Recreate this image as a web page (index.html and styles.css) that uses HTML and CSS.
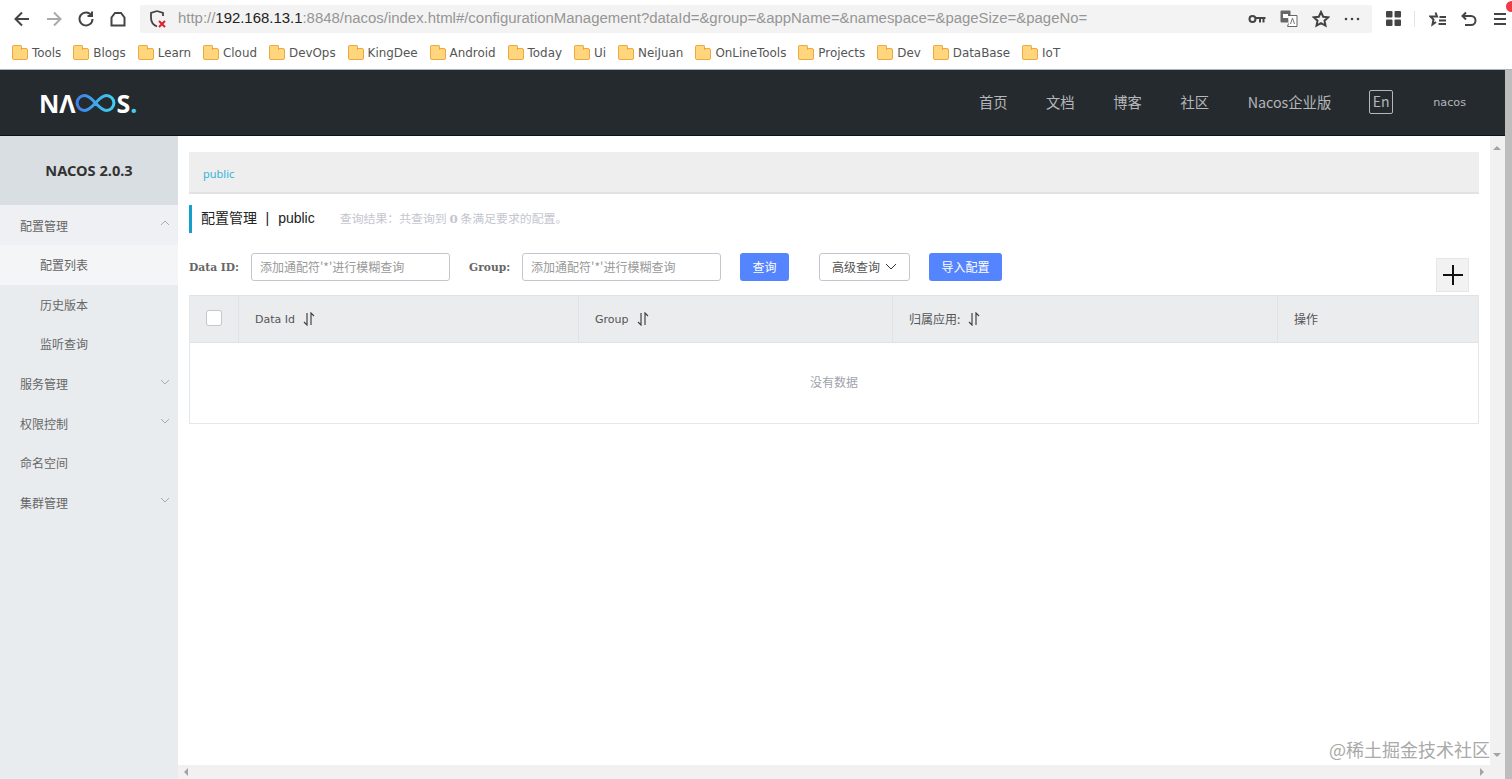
FILE: index.html
```html
<!DOCTYPE html>
<html lang="zh-CN">
<head>
    <meta charset="UTF-8">
    <meta name="viewport" content="width=device-width, initial-scale=1.0">
    <title>Nacos</title>
    <link rel="stylesheet" href="styles.css">
</head>
<body>
    <div class="toolbar">
        <div class="tool"><svg width="18" height="18" viewBox="0 0 18 18"><path d="M16 9H2.5M9 2.5 2.5 9 9 15.500" class="ico"/></svg></div>
        <div class="tool"><svg width="18" height="18" viewBox="0 0 18 18"><path d="M2 9h13.500M9 2.500 15.500 9 9 15.500" class="ico faded"/></svg></div>
        <div class="tool"><svg width="18" height="18" viewBox="0 0 18 18"><path d="M14.500 5.500A6.500 6.500 0 1 0 15.500 9M15 1.500v4.500h-4.500" class="ico"/></svg></div>
        <div class="tool"><svg width="18" height="18" viewBox="0 0 18 18"><path d="M2.500 15.500V7.500L6 3h6l3.500 4.500v8z" class="ico"/></svg></div>
        <div class="address">
            <svg class="shield" width="18" height="20" viewBox="0 0 18 20"><path d="M8 2 2 4v5c0 4 2.500 7 6 8.500M8 2l6 2v3" class="ico thin"/><path d="M10 12l6 6M16 12l-6 6" class="cross"/></svg>
            <div class="url">http://<b>192.168.13.1</b>:8848/nacos/index.html#/configurationManagement?dataId=&amp;group=&amp;appName=&amp;namespace=&amp;pageSize=&amp;pageNo=</div>
            <div class="address-icons">
                <svg width="18" height="12" viewBox="0 0 18 12"><circle cx="4.500" cy="6" r="3" class="ico"/><path d="M8 5h9.500M12 5v4.500M15.500 5v4.500" class="ico"/></svg>
                <svg width="18" height="18" viewBox="0 0 18 18"><rect x="0.500" y="0.500" width="10" height="12" rx="1" fill="#666"/><rect x="3" y="4" width="5" height="4" fill="#fff"/><path d="M8 5.500h9v11H7.500l1-3" fill="#fff" stroke="#666"/><path d="M10.500 14l2-6 2 6" fill="none" stroke="#777"/></svg>
                <svg width="18" height="18" viewBox="0 0 18 18"><path d="M9 2l2.200 4.700 5 .6-3.700 3.400 1 5L9 13.200l-4.500 2.500 1-5L1.800 7.300l5-.6z" class="ico"/></svg>
                <svg width="16" height="4" viewBox="0 0 16 4"><circle cx="2" cy="2" r="1.300" fill="#444"/><circle cx="8" cy="2" r="1.300" fill="#444"/><circle cx="14" cy="2" r="1.300" fill="#444"/></svg>
            </div>
        </div>
        <div class="toolbar-right">
            <svg width="15" height="15" viewBox="0 0 15 15" fill="#444"><rect width="6.500" height="6.500" rx="1"/><rect x="8.500" width="6.500" height="6.500" rx="1"/><rect y="8.500" width="6.500" height="6.500" rx="1"/><rect x="8.500" y="8.500" width="6.500" height="6.500" rx="1"/></svg>
            <span class="divider"></span>
            <svg width="18" height="16" viewBox="0 0 18 16"><path d="M6.500 1.500l1.500 4h-6.500l3 3-1 5 3.500-2.500M10.500 6H17M10 9.500h7M9.500 13H17" class="ico"/></svg>
            <svg width="16" height="16" viewBox="0 0 16 16"><path d="M5 1.500 1.500 5 5 8.500M2 5h8a4 4 0 0 1 0 9H4" class="ico"/></svg>
            <svg width="14" height="14" viewBox="0 0 14 14"><path d="M1 2h12M1 7h12M1 12h12" class="ico"/></svg>
        </div>
        <span class="red-dot"></span>
    </div>

    <div class="bookmarks">
        <div class="bookmark"><span class="folder"></span>Tools</div>
        <div class="bookmark"><span class="folder"></span>Blogs</div>
        <div class="bookmark"><span class="folder"></span>Learn</div>
        <div class="bookmark"><span class="folder"></span>Cloud</div>
        <div class="bookmark"><span class="folder"></span>DevOps</div>
        <div class="bookmark"><span class="folder"></span>KingDee</div>
        <div class="bookmark"><span class="folder"></span>Android</div>
        <div class="bookmark"><span class="folder"></span>Today</div>
        <div class="bookmark"><span class="folder"></span>Ui</div>
        <div class="bookmark"><span class="folder"></span>NeiJuan</div>
        <div class="bookmark"><span class="folder"></span>OnLineTools</div>
        <div class="bookmark"><span class="folder"></span>Projects</div>
        <div class="bookmark"><span class="folder"></span>Dev</div>
        <div class="bookmark"><span class="folder"></span>DataBase</div>
        <div class="bookmark"><span class="folder"></span>IoT</div>
    </div>

    <div class="frame">
        <div class="app">
            <header class="header">
                <div class="logo">NΛ<svg width="41" height="18" viewBox="0 0 41 18"><defs><linearGradient id="loop"><stop offset="0" stop-color="#3f7fe6"/><stop offset="1" stop-color="#3fd0ef"/></linearGradient></defs><path d="M20.500 9C16 4 13 1.600 9.500 1.600a7.400 7.400 0 0 0 0 14.800C13 16.400 16 14 20.500 9S28 1.600 31.500 1.600a7.400 7.400 0 0 1 0 14.800C28 16.400 25 14 20.500 9z" fill="none" stroke="url(#loop)" stroke-width="3"/></svg>S<span class="logo-dot">.</span></div>
                <nav class="nav">
                    <a>首页</a>
                    <a>文档</a>
                    <a>博客</a>
                    <a>社区</a>
                    <a>Nacos企业版</a>
                </nav>
                <div class="lang">En</div>
                <div class="user">nacos</div>
            </header>
            <div class="content">
                <aside class="sidebar">
                    <div class="version">NACOS 2.0.3</div>
                    <div class="menu-item open">配置管理<svg class="chev" width="10" height="6" viewBox="0 0 10 6"><path d="M1 5l4-4 4 4"/></svg></div>
                    <div class="menu-item sub active">配置列表</div>
                    <div class="menu-item sub">历史版本</div>
                    <div class="menu-item sub">监听查询</div>
                    <div class="menu-item">服务管理<svg class="chev" width="10" height="6" viewBox="0 0 10 6"><path d="M1 1l4 4 4-4"/></svg></div>
                    <div class="menu-item">权限控制<svg class="chev" width="10" height="6" viewBox="0 0 10 6"><path d="M1 1l4 4 4-4"/></svg></div>
                    <div class="menu-item">命名空间</div>
                    <div class="menu-item">集群管理<svg class="chev" width="10" height="6" viewBox="0 0 10 6"><path d="M1 1l4 4 4-4"/></svg></div>
                </aside>
                <main class="main">
                    <div class="namespace"><a>public</a></div>
                    <div class="title-row">
                        <h1 class="title">配置管理<span class="sep">|</span>public</h1>
                        <p class="result">查询结果：共查询到 <b>0</b> 条满足要求的配置。</p>
                    </div>
                    <div class="filters">
                        <label class="filter-label">Data ID:</label>
                        <div class="input">添加通配符'*'进行模糊查询</div>
                        <label class="filter-label group-label">Group:</label>
                        <div class="input">添加通配符'*'进行模糊查询</div>
                        <button class="btn primary query">查询</button>
                        <button class="btn advanced">高级查询<svg width="12" height="7" viewBox="0 0 12 7"><path d="M1 1l5 5 5-5"/></svg></button>
                        <button class="btn primary import">导入配置</button>
                    </div>
                    <div class="table">
                        <div class="table-head">
                            <div class="cell"><span class="checkbox"></span></div>
                            <div class="cell">Data Id<svg class="sort" width="12" height="14" viewBox="0 0 12 14"><path d="M4 1v12L1 10M8 13V1l3 3"/></svg></div>
                            <div class="cell">Group<svg class="sort" width="12" height="14" viewBox="0 0 12 14"><path d="M4 1v12L1 10M8 13V1l3 3"/></svg></div>
                            <div class="cell cn">归属应用:<svg class="sort" width="12" height="14" viewBox="0 0 12 14"><path d="M4 1v12L1 10M8 13V1l3 3"/></svg></div>
                            <div class="cell cn">操作</div>
                        </div>
                        <div class="table-empty">没有数据</div>
                    </div>
                    <button class="add"><svg width="20" height="20" viewBox="0 0 20 20"><path d="M10 0v20M0 10h20"/></svg></button>
                </main>
                <div class="vscroll"><span class="arrow up"></span><span class="arrow down"></span></div>
                <div class="hscroll"><span class="arrow left"></span><span class="arrow right"></span></div>
                <div class="watermark">@稀土掘金技术社区</div>
            </div>
        </div>
        <div class="page-scroll"></div>
    </div>
</body>
</html>
```
FILE: styles.css
```css
* {
    margin: 0;
    padding: 0;
    box-sizing: border-box;
}

html, body {
    height: 100%;
    overflow: hidden;
}

body {
    display: flex;
    flex-direction: column;
    background-color: #fff;
    font-family: "Noto Sans CJK SC", "Noto Sans", sans-serif;
    color: #333;
}

.ico {
    fill: none;
    stroke: #444;
    stroke-width: 2;
}

.ico.faded {
    stroke: #aaa;
}

.ico.thin {
    stroke-width: 1.8;
}

.cross {
    stroke: #d8222a;
    stroke-width: 2;
}

/* browser chrome */
.toolbar {
    position: relative;
    height: 33px;
    display: flex;
    align-items: center;
    padding: 4px 0 0 6px;
}

.tool {
    width: 32px;
    display: flex;
    justify-content: center;
}

.address {
    width: 1232px;
    height: 28px;
    margin-left: 6px;
    display: flex;
    align-items: center;
    padding: 0 12px 0 9px;
    background-color: #f3f3f3;
    border-radius: 2px;
}

.shield {
    margin-right: 11px;
}

.url {
    flex: 1;
    padding-bottom: 3px;
    font-family: "Liberation Sans", sans-serif;
    font-size: 14.930px;
    color: #969696;
    white-space: nowrap;
}

.url b {
    font-weight: normal;
    color: #222;
}

.address-icons {
    display: flex;
    align-items: center;
    gap: 14px;
}

.toolbar-right {
    display: flex;
    align-items: center;
    padding-left: 14px;
}

.toolbar-right .divider {
    width: 1px;
    height: 16px;
    margin: 0 14px 0 13px;
    background-color: #e3e3e3;
}

.toolbar-right svg:nth-of-type(3) {
    margin-left: 14px;
}

.toolbar-right svg:nth-of-type(4) {
    margin-left: 16px;
}

.red-dot {
    position: absolute;
    top: 1px;
    right: -5px;
    width: 11px;
    height: 11px;
    border-radius: 50%;
    background-color: #f03a46;
}

.bookmarks {
    height: 37px;
    display: flex;
    align-items: center;
    padding: 3px 0 0 12px;
    border-bottom: 1px solid #aab4bc;
    font-family: "DejaVu Sans", sans-serif;
    font-size: 11.900px;
    color: #555;
}

.bookmark {
    display: flex;
    align-items: center;
    gap: 4px;
    margin-right: 12px;
}

.folder {
    position: relative;
    width: 16px;
    height: 12px;
    margin-top: 2px;
    background-color: #ffd57e;
    border: 1px solid #eda93b;
    border-radius: 2px;
}

.folder::before {
    content: "";
    position: absolute;
    top: -4px;
    left: -1px;
    width: 8px;
    height: 4px;
    background-color: #ffd57e;
    border: 1px solid #eda93b;
    border-bottom: none;
    border-radius: 2px 2px 0 0;
}

.frame {
    flex: 1;
    min-height: 0;
    display: flex;
}

.app {
    flex: 1;
    min-width: 0;
    display: flex;
    flex-direction: column;
}

.page-scroll {
    width: 7px;
    background-color: #bdbdbd;
}

/* nacos header */
.header {
    height: 66px;
    display: flex;
    align-items: center;
    padding-left: 39px;
    background-color: #252a2f;
    border-bottom: 1px solid #111;
    color: #b5b7b9;
}

.logo {
    display: flex;
    align-items: center;
    font-family: "Open Sans", sans-serif;
    font-size: 25px;
    font-weight: 700;
    color: #fff;
}

.logo svg {
    margin: 0 1px 0 -1px;
}

.logo-dot {
    color: #3fd0ef;
}

.nav {
    display: flex;
    gap: 38.600px;
    margin-left: auto;
    padding-bottom: 3px;
    font-size: 14.300px;
}

.lang {
    width: 24px;
    height: 24px;
    margin: 0 0 2px 38px;
    text-align: center;
    line-height: 21px;
    font-size: 14px;
    border: 1px solid #b5b7b9;
    border-radius: 2px;
}

.user {
    margin: 0 39px 0 40px;
    font-family: "DejaVu Sans", sans-serif;
    font-size: 11.200px;
}

.content {
    position: relative;
    flex: 1;
    min-height: 0;
    display: flex;
}

/* side menu */
.sidebar {
    width: 178px;
    background-color: #e9ecef;
    font-size: 12px;
    color: #666;
}

.version {
    height: 69.400px;
    display: flex;
    justify-content: center;
    align-items: center;
    padding-bottom: 2px;
    background-color: #d9dee2;
    font-family: "Noto Sans", sans-serif;
    font-size: 14.600px;
    font-weight: bold;
    color: #333;
}

.menu-item {
    height: 39.600px;
    display: flex;
    align-items: center;
    justify-content: space-between;
    padding: 0 8px 0 20px;
}

.menu-item.sub {
    padding-left: 40px;
}

.menu-item.open {
    background-color: #eef0f3;
}

.menu-item.active {
    background-color: #f3f5f7;
}

.chev {
    margin-bottom: 4px;
}

.chev path {
    fill: none;
    stroke: #aaa;
}

/* page body */
.main {
    position: relative;
    flex: 1;
    min-width: 0;
    padding: 16px 11px 0;
}

.namespace {
    height: 42px;
    padding: 14px 0 0 14px;
    background-color: #eee;
    border-bottom: 2px solid #e2e2e2;
    font-family: "Noto Sans", sans-serif;
    font-size: 11px;
    color: #33b5d6;
}

.title-row {
    height: 28px;
    margin-top: 11px;
    display: flex;
    align-items: center;
    padding-left: 9px;
    border-left: 3px solid #14a0c8;
}

.title {
    padding-bottom: 4px;
    font-family: "Liberation Sans", "Noto Sans CJK SC", sans-serif;
    font-size: 14px;
    font-weight: normal;
    color: #222;
}

.sep {
    margin: 0 9px 0 8.500px;
}

.result {
    margin-left: 25px;
    padding-bottom: 3px;
    font-size: 11.900px;
    color: #c4c6cf;
}

.result b {
    font-family: "DejaVu Serif", serif;
}

.filters {
    height: 28px;
    margin-top: 20px;
    display: flex;
    align-items: center;
}

.filter-label {
    font-family: "DejaVu Serif", serif;
    font-size: 10.700px;
    font-weight: bold;
    color: #666;
}

.group-label {
    margin-left: 19px;
}

.input {
    width: 199px;
    height: 28px;
    margin-left: 12px;
    padding-left: 8px;
    line-height: 26px;
    font-size: 12px;
    color: #999;
    border: 1px solid #c4c6cf;
    border-radius: 3px;
}

.btn {
    height: 28px;
    padding-bottom: 2px;
    font-family: inherit;
    font-size: 12px;
    border-radius: 3px;
    border: 1px solid transparent;
}

.btn.primary {
    background-color: #5584ff;
    color: #fff;
}

.query {
    width: 49px;
    margin-left: 19px;
}

.advanced {
    width: 91px;
    margin-left: 30px;
    display: flex;
    align-items: center;
    justify-content: center;
    gap: 5px;
    background-color: #fff;
    border-color: #c4c6cf;
    color: #555;
}

.advanced path {
    fill: none;
    stroke: #333;
}

.import {
    width: 73px;
    margin-left: 19px;
}

.table {
    margin-top: 14px;
    border: 1px solid #e6e7eb;
    border-top: none;
}

.table-head {
    height: 48px;
    display: grid;
    grid-template-columns: 49px 340px 314px 385px 1fr;
    background-color: #eaecee;
    border-top: 1px solid #e0e2e6;
    border-bottom: 1px solid #e0e2e6;
    font-size: 12px;
    color: #555;
}

.cell {
    display: flex;
    align-items: center;
    padding-left: 16px;
    border-right: 1px solid #e0e2e6;
}

.cell:last-child {
    border-right: none;
}

.cell:not(:first-child) {
    font-family: "DejaVu Sans", "Noto Sans CJK SC", sans-serif;
    font-size: 11px;
}

.cell.cn:not(:first-child) {
    padding-bottom: 1px;
    font-family: "Noto Sans CJK SC", sans-serif;
    font-size: 12px;
}

.checkbox {
    width: 16px;
    height: 16px;
    margin-bottom: 2px;
    background-color: #fff;
    border: 1px solid #c4c6cf;
    border-radius: 3px;
}

.sort {
    margin-left: 8px;
}

.sort path {
    fill: none;
    stroke: #444;
    stroke-width: 1.200;
}

.table-empty {
    height: 80px;
    display: flex;
    justify-content: center;
    align-items: center;
    padding-bottom: 4px;
    font-size: 12px;
    color: #a0a2ad;
}

.add {
    position: absolute;
    top: 122px;
    right: 21px;
    width: 33px;
    height: 34px;
    display: flex;
    justify-content: center;
    align-items: center;
    background-color: #f2f2f2;
    border: 1px solid #e6e6e6;
}

.add path {
    stroke: #111;
    stroke-width: 2;
}

/* inner scrollbars */
.vscroll {
    position: relative;
    width: 15px;
    background-color: #f1f1f1;
}

.hscroll {
    position: absolute;
    left: 178px;
    right: 15px;
    bottom: 0;
    height: 14px;
    background-color: #f1f1f1;
}

.arrow {
    position: absolute;
    width: 0;
    height: 0;
    border: 4px solid transparent;
}

.arrow.up {
    top: 6px;
    left: 3px;
    border-bottom-color: #a3a3a3;
}

.arrow.down {
    bottom: 18px;
    left: 3px;
    border-top-color: #a3a3a3;
}

.arrow.left {
    top: 3px;
    left: 2px;
    border-right-color: #a3a3a3;
}

.arrow.right {
    top: 3px;
    right: 2px;
    border-left-color: #a3a3a3;
}

.watermark {
    position: absolute;
    right: 15px;
    bottom: 17px;
    font-size: 18px;
    color: #a9a9a9;
}
```
